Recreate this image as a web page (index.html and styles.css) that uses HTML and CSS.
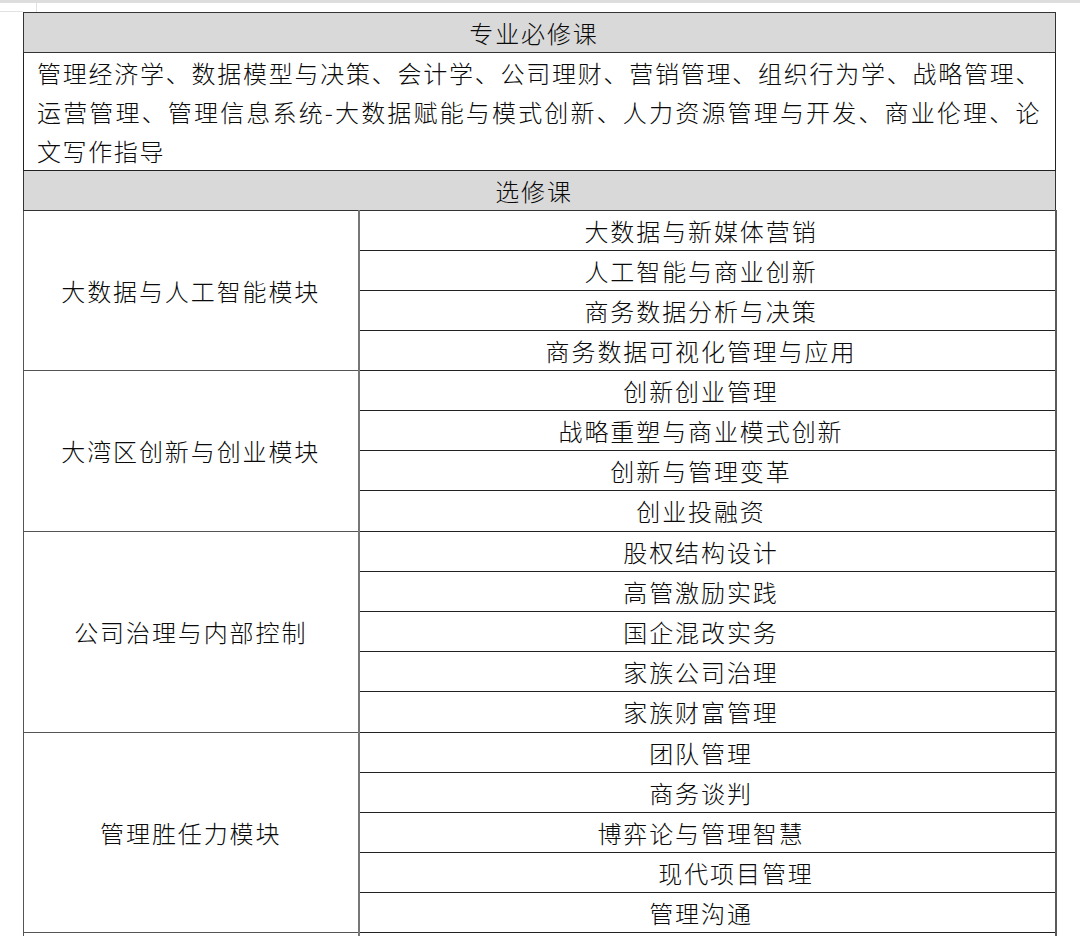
FILE: index.html
```html
<!DOCTYPE html>
<html lang="zh-CN">
<head>
<meta charset="utf-8">
<title>课程设置</title>
<link rel="stylesheet" href="styles.css">
</head>
<body>
<div class="corner-v"></div>
<div class="corner-h"></div>
<div class="page">
  <table class="courses">
    <colgroup><col class="c1"><col class="c2"></colgroup>
    <tr class="head"><td colspan="2">专业必修课</td></tr>
    <tr class="req"><td colspan="2"><p>管理经济学、数据模型与决策、会计学、公司理财、营销管理、组织行为学、战略管理、运营管理、管理信息系统-大数据赋能与模式创新、人力资源管理与开发、商业伦理、论文写作指导</p></td></tr>
    <tr class="head"><td colspan="2">选修课</td></tr>

    <tr class="first"><td class="mod" rowspan="4">大数据与人工智能模块</td><td class="item">大数据与新媒体营销</td></tr>
    <tr><td class="item">人工智能与商业创新</td></tr>
    <tr><td class="item">商务数据分析与决策</td></tr>
    <tr><td class="item">商务数据可视化管理与应用</td></tr>

    <tr class="first"><td class="mod" rowspan="4">大湾区创新与创业模块</td><td class="item">创新创业管理</td></tr>
    <tr><td class="item">战略重塑与商业模式创新</td></tr>
    <tr><td class="item">创新与管理变革</td></tr>
    <tr class="tall"><td class="item">创业投融资</td></tr>

    <tr class="first"><td class="mod" rowspan="5">公司治理与内部控制</td><td class="item">股权结构设计</td></tr>
    <tr><td class="item">高管激励实践</td></tr>
    <tr><td class="item">国企混改实务</td></tr>
    <tr><td class="item">家族公司治理</td></tr>
    <tr class="tall"><td class="item">家族财富管理</td></tr>

    <tr class="first"><td class="mod" rowspan="5">管理胜任力模块</td><td class="item">团队管理</td></tr>
    <tr><td class="item">商务谈判</td></tr>
    <tr><td class="item">博弈论与管理智慧</td></tr>
    <tr><td class="item shift">现代项目管理</td></tr>
    <tr><td class="item">管理沟通</td></tr>

    <tr class="first"><td class="mod" rowspan="2">&nbsp;</td><td class="item">&nbsp;</td></tr>
    <tr><td class="item">&nbsp;</td></tr>
  </table>
</div>
</body>
</html>
```

FILE: styles.css
```css
html, body {
  margin: 0;
  padding: 0;
  background: #ffffff;
  overflow: hidden;
}
body {
  position: relative;
  height: 936px;
  border-top: 3px solid #dddddd;
  box-sizing: border-box;
  font-family: "Noto Sans CJK SC", "Noto Sans", sans-serif;
  font-weight: 300;
  color: #0a0a0a;
}
.corner-v {
  position: absolute;
  left: 36px;
  top: 0;
  width: 1px;
  height: 9px;
  background: #e2e2e2;
}
.corner-h {
  position: absolute;
  left: 0;
  top: 8px;
  width: 23px;
  height: 1px;
  background: #e2e2e2;
}
.page {
  padding: 9px 0 0 23px;
}
.courses {
  border-collapse: collapse;
  width: 1032px;
  table-layout: fixed;
  font-size: 24px;
  letter-spacing: 1.9px;
}
.c1 { width: 335px; }
.c2 { width: 697px; }
.courses td {
  border: 1px solid #222222;
  padding: 0;
  height: 39px;
  line-height: 38px;
  text-align: center;
  vertical-align: middle;
}
.head td {
  background: #d9d9d9;
  border-color: #333333;
  padding-right: 11px;
}
.req td {
  height: 116px;
  padding: 0 14px 0 13px;
  text-align: justify;
}
.req p {
  margin: 0;
  line-height: 39px;
  letter-spacing: 1.6px;
  text-align: justify;
}
.courses td.mod {
  border: 1px solid #555555;
  border-right: 2px solid #777777;
}
.courses .first td {
  border-top: 1px solid #444444;
}
.courses .tall td {
  height: 40px;
}
.courses td.item {
  border-right: 2px solid #5a5a5a;
  padding-right: 12px;
}
.courses td.shift {
  padding-left: 58px;
  padding-right: 0;
}
```
